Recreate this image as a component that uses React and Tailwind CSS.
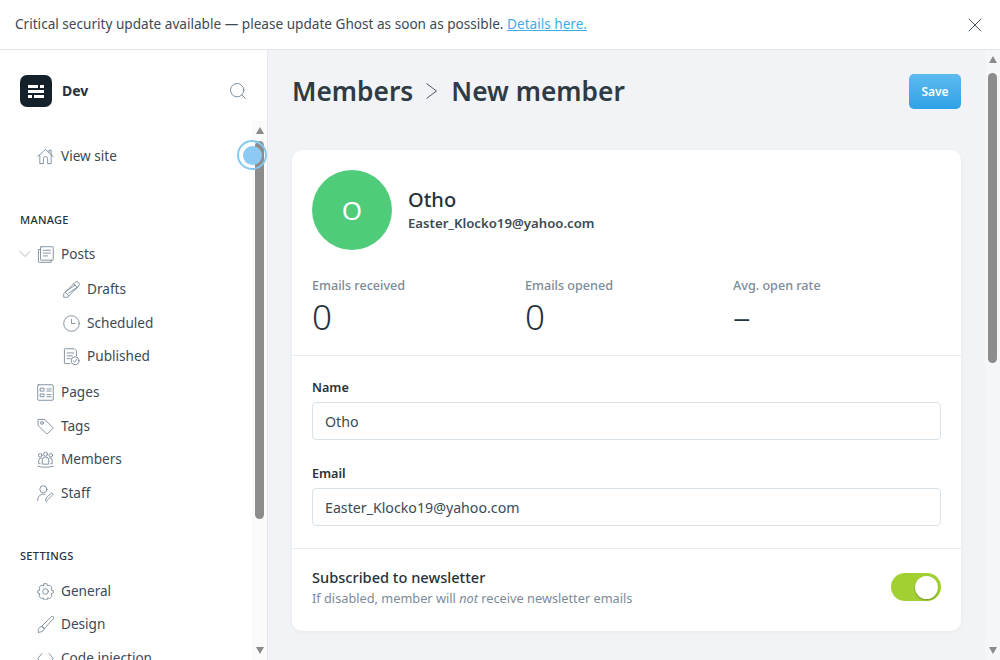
import { X, Search, ChevronDown } from 'lucide-react';

const ico = { fill: 'none', stroke: 'currentColor', strokeWidth: 1.1, strokeLinecap: 'round', strokeLinejoin: 'round', viewBox: '0 0 24 24' };

function Icon({ children, className = 'w-[17px] h-[17px]' }) {
  return <svg {...ico} className={`${className} text-[#64788a] shrink-0`}>{children}</svg>;
}

const icons = {
  home: <><path d="M1 12 12 2l11 10" /><path d="M4 10v12h5v-7a3 3 0 0 1 6 0v7h5V10" /><path d="M17 6V3h3v6" /></>,
  posts: <><rect x="5" y="1" width="18" height="19" rx="1" /><path d="M5 5H2v17a1 1 0 0 0 1 1h17v-3" /><path d="M9 6h10M9 10h10M9 14h6" /></>,
  pencil: <><path d="M6 23 1 23l0-5L17 2a3 3 0 0 1 5 5z" /><path d="M15 4l5 5M3 16l5 5M5 14 17 6M8 17 20 9" /></>,
  clock: <><circle cx="12" cy="12" r="11" /><path d="M12 6v6h5" /></>,
  published: <><path d="M10 22H3a1 1 0 0 1-1-1V2a1 1 0 0 1 1-1h13l3 3v7" /><path d="M6 7h9M6 11h7M6 15h4" /><circle cx="17" cy="18" r="5.5" /><path d="m14.5 18 2 2 3-4" /></>,
  pages: <><rect x="1" y="1" width="22" height="22" rx="1.5" /><rect x="5" y="6" width="5" height="4" /><rect x="5" y="14" width="5" height="4" /><path d="M14 7h6M14 10h6M14 15h6M14 18h6" /></>,
  tags: <><path d="M2 2h9l11 11a1.5 1.5 0 0 1 0 2l-7 7a1.5 1.5 0 0 1-2 0L2 11z" /><circle cx="7" cy="7" r="2" /></>,
  members: <><circle cx="12" cy="4.500" r="2.800" /><circle cx="4.500" cy="6" r="2.500" /><circle cx="19.500" cy="6" r="2.500" /><path d="M7.500 18v-5a4.500 4.500 0 0 1 9 0v5z" /><path d="M4.500 18H2.500v-5a3 3 0 0 1 3-3h1M19.500 18h2v-5a3 3 0 0 0-3-3h-1" /><path d="M1 21.500c6 2 16 2 22 0" /></>,
  staff: <><circle cx="9" cy="6" r="5" /><path d="M1 22v-2a8 8 0 0 1 10-7" /><path d="m13 23-1-1 1-4 8-7 2 2-8 8z" /></>,
  general: <><circle cx="12" cy="12" r="4" /><path d="m10 1 4 0 1 3 3-1 3 3-1 4 3 1v3l-3 1 1 4-3 3-3-1-1 3h-4l-1-3-3 1-3-3 1-4-3-1v-3l3-1-1-4 3-3 3 1z" /></>,
  design: <><path d="M2 23c-1-4 1-8 5-8 2 0 3 2 3 3 0 3-4 5-8 5z" /><path d="m7 15 3 3L23 4a2 2 0 0 0-3-3z" /></>,
  code: <><path d="M7 5 1 12l6 7M17 5l6 7-6 7" /></>,
};

function NavItem({ icon, label, indent, className = '' }) {
  return (
    <div className={`flex items-center ${indent ? 'pl-[63px] gap-[7px]' : 'pl-[37px] gap-[7px]'} ${className}`}>
      <Icon>{icons[icon]}</Icon>
      <span className="text-[13.6px] leading-[20px] text-[#3c4a55]">{label}</span>
    </div>
  );
}

function Heading({ children, className = '' }) {
  return <div className={`pl-[20px] text-[11px] leading-[16px] font-medium tracking-[0.3px] text-[#26323b] ${className}`}>{children}</div>;
}

function ScrollBar({ thumbTop, thumbHeight, className = '' }) {
  return (
    <div className={`w-[15px] shrink-0 flex flex-col items-center ${className}`}>
      <div className="mt-[6px] w-0 h-0 border-x-[4.500px] border-x-transparent border-b-[7px] border-b-[#8a8a8a]" />
      <div className="w-[9px] rounded-[5px] bg-[#8c8c8c]" style={{ marginTop: thumbTop, height: thumbHeight }} />
      <div className="mt-auto mb-[6px] w-0 h-0 border-x-[4.500px] border-x-transparent border-t-[7px] border-t-[#8a8a8a]" />
    </div>
  );
}

function Stat({ label, value, className }) {
  return (
    <div className={className}>
      <div className="pt-[1px] text-[12.6px] leading-[18px] font-medium text-[#7c8b99]">{label}</div>
      <div className="mt-[1px] text-[35px] leading-[42px] font-light text-[#26323b]">{value}</div>
    </div>
  );
}

function Field({ label, value, className = '' }) {
  return (
    <div className={className}>
      <div className="pt-[1px] text-[12.6px] leading-[18px] font-semibold text-[#26323b]">{label}</div>
      <div className="mt-[5px] h-[38px] border border-[#d8e2e8] rounded-[4px] bg-white px-[12px] pt-[2px] flex items-center text-[14.2px] text-[#3c4a55]">{value}</div>
    </div>
  );
}

export default function App() {
  return (
    <div className="w-[1000px] h-[660px] overflow-hidden flex flex-col bg-white font-['Noto_Sans',sans-serif]">
      <div className="h-[50px] shrink-0 border-b border-[#e2e4e8] flex items-center pl-[15px] pr-[13px]">
        <p className="text-[13.6px] text-[#3c4a55]">
          Critical security update available — please update Ghost as soon as possible.{' '}
          <span className="text-[#40aee8] underline">Details here.</span>
        </p>
        <X className="ml-auto w-[24px] h-[24px] text-[#4a5660]" strokeWidth={1} />
      </div>

      <div className="flex-1 flex min-h-0">
        <aside className="relative w-[268px] shrink-0 border-r border-[#e6e8ec] flex">
          <div className="flex-1 min-w-0 overflow-hidden">
            <div className="h-[82px] flex items-center pl-[20px] pr-[4px]">
              <div className="w-[32px] h-[32px] rounded-[7px] bg-[#15212a] flex flex-col items-center justify-center gap-[2px]">
                <div className="flex gap-[2px]"><i className="w-[10px] h-[3px] bg-white" /><i className="w-[4px] h-[3px] bg-white" /></div>
                <div className="w-[16px] h-[3px] bg-white" />
                <div className="flex gap-[2px]"><i className="w-[4px] h-[3px] bg-white" /><i className="w-[10px] h-[3px] bg-white" /></div>
              </div>
              <span className="ml-[10px] text-[14px] font-bold text-[#26323b] -mt-[2px]">Dev</span>
              <Search className="ml-auto w-[20px] h-[20px] text-[#64788a]" strokeWidth={1} />
            </div>

            <NavItem icon="home" label="View site" className="mt-[14px]" />

            <Heading className="mt-[46px]">MANAGE</Heading>
            <div className="relative mt-[16px]">
              <ChevronDown className="absolute left-[15px] top-[0px] w-[20px] h-[20px] text-[#9aa7b1]" strokeWidth={1} />
              <NavItem icon="posts" label="Posts" className="pl-[37px]" />
            </div>
            <NavItem icon="pencil" label="Drafts" indent className="mt-[15px]" />
            <NavItem icon="clock" label="Scheduled" indent className="mt-[14px]" />
            <NavItem icon="published" label="Published" indent className="mt-[13px]" />
            <NavItem icon="pages" label="Pages" className="mt-[16px]" />
            <NavItem icon="tags" label="Tags" className="mt-[14px]" />
            <NavItem icon="members" label="Members" className="mt-[13px]" />
            <NavItem icon="staff" label="Staff" className="mt-[14px]" />

            <Heading className="mt-[45px]">SETTINGS</Heading>
            <NavItem icon="general" label="General" className="mt-[17px]" />
            <NavItem icon="design" label="Design" className="mt-[13px]" />
            <NavItem icon="code" label="Code injection" className="mt-[14px]" />
          </div>
          <ScrollBar thumbTop={7} thumbHeight={378} className="mt-[71px] bg-[#fafafa]" />
          {/* pulse marker sits on top of the scrollbar */}
          <div className="absolute left-[237px] top-[90px] w-[30px] h-[30px] rounded-full border-2 border-[#85c8f0] flex items-center justify-center">
            <div className="w-[19px] h-[19px] rounded-full bg-[#8ccaf4]" />
          </div>
        </aside>

        <main className="flex-1 min-w-0 bg-[#f1f3f7] flex">
          <div className="flex-1 min-w-0 pl-[24px] pr-[24px] overflow-hidden">
            <div className="h-[100px] flex items-start pt-[24px]">
              <h1 className="flex items-center -mt-[1px] text-[26.3px] leading-[36px] font-semibold text-[#2f3b44]">
                Members
                <svg viewBox="0 0 11 16" className="ml-[13px] mr-[14px] w-[11px] h-[16px] text-[#4a5660]" fill="none" stroke="currentColor" strokeWidth="1">
                  <path d="M0.5 0.5 10.500 8 0.5 15.500" />
                </svg>
                New member
              </h1>
              <button className="ml-auto w-[52px] h-[35px] rounded-[5px] text-[12px] font-semibold text-white bg-gradient-to-b from-[#5cbaf0] to-[#2ea2e6]">Save</button>
            </div>

            <div className="bg-white rounded-[10px] shadow-[0_1px_4px_rgba(0,0,0,0.05)]">
              <div className="px-[20px] pt-[20px] pb-[17px] border-b border-[#e8eef2]">
                <div className="flex items-center">
                  <div className="w-[80px] h-[80px] rounded-full bg-[#4fcc79] flex items-center justify-center text-white text-[26px]">O</div>
                  <div className="ml-[16px]">
                    <div className="text-[20px] leading-[26px] font-medium text-[#26323b]">Otho</div>
                    <div className="text-[13.2px] leading-[20px] font-semibold text-[#3c4a55]">Easter_Klocko19@yahoo.com</div>
                  </div>
                </div>
                <div className="mt-[26px] flex">
                  <Stat label="Emails received" value="0" className="w-[213px]" />
                  <Stat label="Emails opened" value="0" className="w-[208px]" />
                  <Stat label="Avg. open rate" value="–" />
                </div>
              </div>

              <div className="px-[20px] pt-[22px] pb-[22px] border-b border-[#e8eef2]">
                <Field label="Name" value="Otho" />
                <Field label="Email" value="Easter_Klocko19@yahoo.com" className="mt-[24px]" />
              </div>

              <div className="px-[20px] h-[82px] pb-[6px] flex items-center">
                <div>
                  <div className="text-[14.6px] leading-[20px] font-medium text-[#26323b]">Subscribed to newsletter</div>
                  <div className="mt-[1px] text-[12.75px] leading-[20px] text-[#7c8b99]">If disabled, member will <em>not</em> receive newsletter emails</div>
                </div>
                <div className="ml-auto w-[50px] h-[28px] rounded-full bg-[#a2d033] flex items-center justify-end pr-[3px]">
                  <div className="w-[23px] h-[23px] rounded-full bg-white shadow-[0_1px_2px_rgba(0,0,0,0.3)]" />
                </div>
              </div>
            </div>
          </div>
          <ScrollBar thumbTop={10} thumbHeight={290} className="bg-[#f5f6f8]" />
        </main>
      </div>
    </div>
  );
}
